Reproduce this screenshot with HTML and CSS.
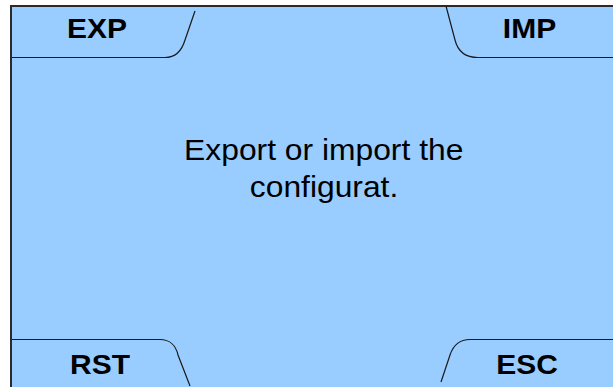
FILE: index.html
```html
<!DOCTYPE html>
<html>
<head>
<meta charset="utf-8">
<link rel="stylesheet" href="styles.css">
</head>
<body>
<div class="screen">
  <div class="row row-top">
    <div class="tab tab-tl">
      <svg class="tab-line" viewBox="0 0 185 52" width="185" height="52"><path d="M0 50.5 H153 C164 50.5 170 43 173 33 L183 4"/></svg>
      <span class="label">EXP</span>
    </div>
    <div class="tab tab-tr">
      <svg class="tab-line" viewBox="0 0 167 52" width="167" height="52"><path d="M0 -1 L9 33 C12 45 20 50.5 32 50.5 H167"/></svg>
      <span class="label">IMP</span>
    </div>
  </div>
  <div class="middle">
    <div class="message"><span class="msg-line">Export or import the</span><span class="msg-line">configurat.</span></div>
  </div>
  <div class="row row-bottom">
    <div class="tab tab-bl">
      <svg class="tab-line" viewBox="0 0 185 49" width="185" height="49"><path d="M0 1.5 H148 C158 1.5 164 8 166 17 L178 48"/></svg>
      <span class="label">RST</span>
    </div>
    <div class="tab tab-br">
      <svg class="tab-line" viewBox="0 0 172 49" width="172" height="49"><path d="M0 44 L9 17 C12 8 18 1.5 29 1.5 H172"/></svg>
      <span class="label">ESC</span>
    </div>
  </div>
</div>
</body>
</html>
```
FILE: styles.css
```css
html, body {
  margin: 0;
  padding: 0;
  background: #ffffff;
  width: 613px;
  height: 387px;
  overflow: hidden;
}
.screen {
  margin: 5px 0 0 10px;
  width: 601px;
  height: 380px;
  background: #99ccff;
  border-top: 2px solid #2a2a2a;
  border-left: 2px solid #2a2a2a;
  display: flex;
  flex-direction: column;
  font-family: "Liberation Sans", Arial, sans-serif;
  color: #000;
}
.row {
  display: flex;
  justify-content: space-between;
}
.row-top { height: 52px; }
.row-bottom { height: 49px; }
.tab {
  position: relative;
  height: 100%;
  display: flex;
  align-items: center;
}
.tab-tl { width: 185px; }
.tab-tr { width: 167px; }
.tab-bl { width: 185px; }
.tab-br { width: 172px; }
.tab-line {
  position: absolute;
  left: 0;
  top: 0;
  overflow: visible;
}
.tab-line path {
  fill: none;
  stroke: #1a1a1a;
  stroke-width: 1.2;
}
.label {
  position: relative;
  display: block;
  font-weight: bold;
  font-size: 28px;
  line-height: 28px;
  text-align: center;
  transform: scaleX(1.07);
}
.tab-tl .label { width: 170px; margin-top: -9px; }
.tab-tr .label { width: 176px; margin-top: -9px; }
.tab-bl .label { width: 176px; margin-top: 4px; }
.tab-br .label { width: 186px; margin-top: 4px; }
.middle {
  flex: 1;
  padding: 72px 0 0 23px;
}
.message {
  display: flex;
  flex-direction: column;
  align-items: center;
  font-size: 30px;
  line-height: 37px;
}
.msg-line {
  display: block;
  transform: scaleX(1.06);
}
```
